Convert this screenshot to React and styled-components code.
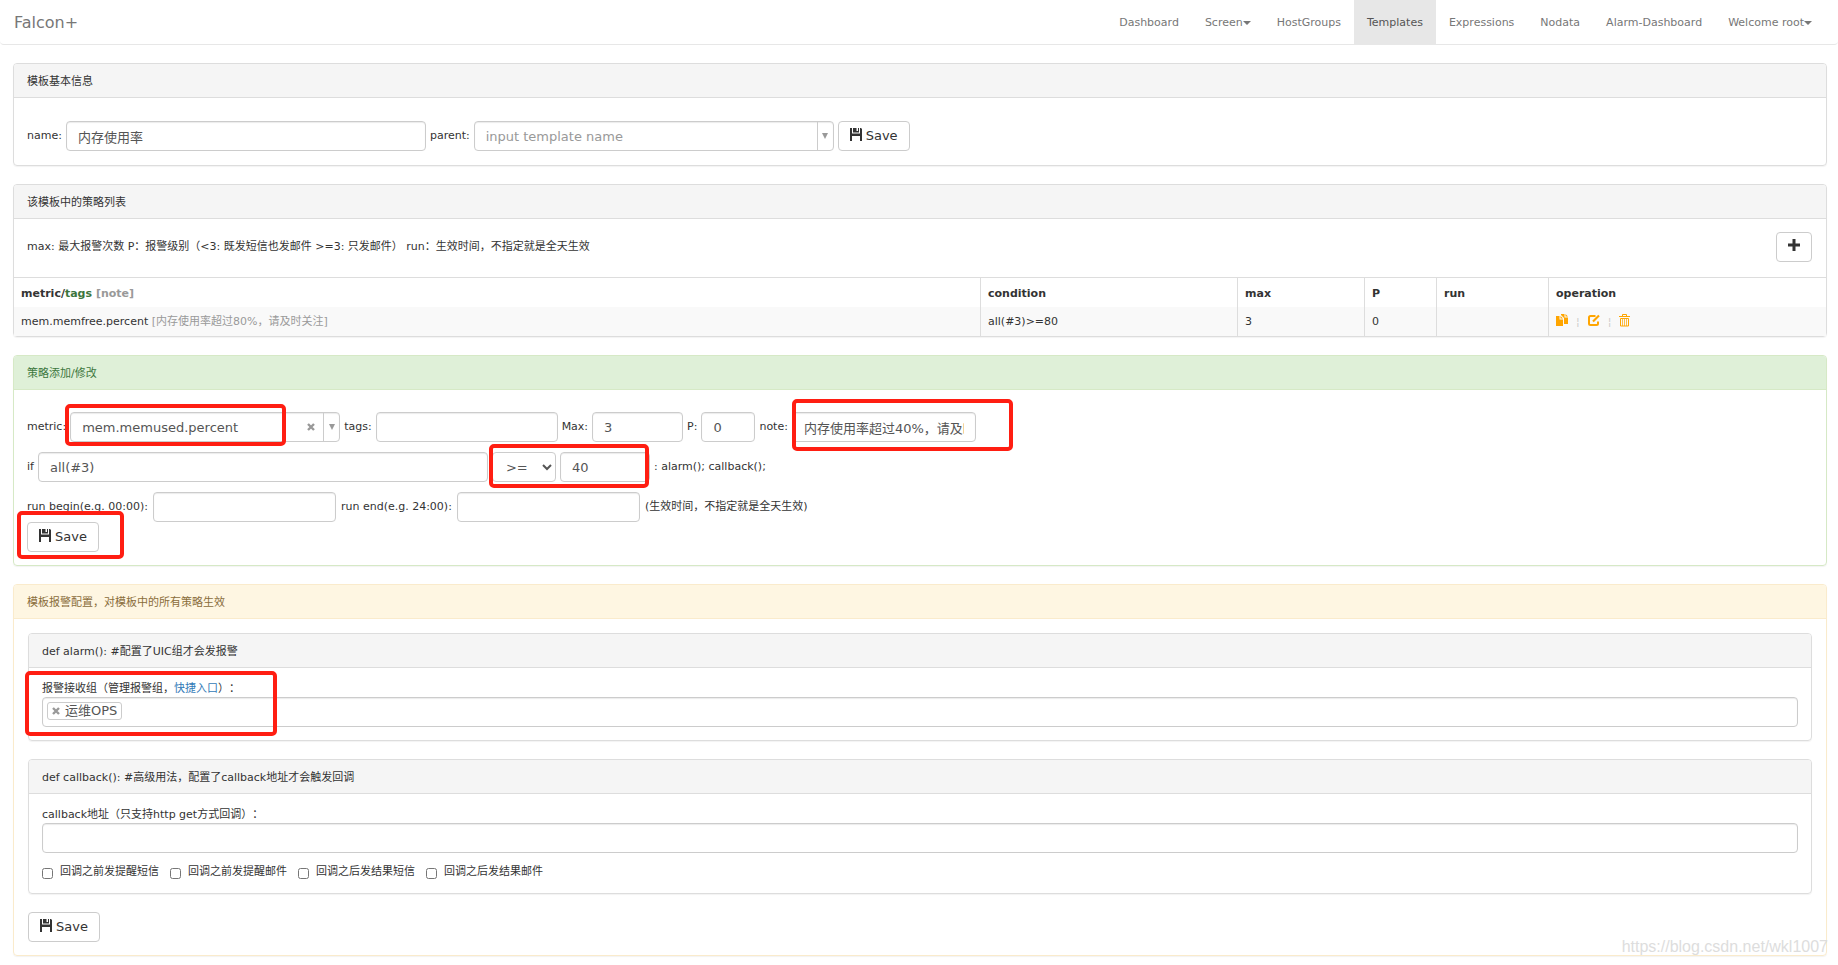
import React from "react";
import styled, { createGlobalStyle } from "styled-components";

const GlobalStyle = createGlobalStyle`
  * {
    box-sizing: border-box;
  }
  body {
    margin: 0;
    background: #fff;
    color: #333;
    font-family: "DejaVu Sans", "Noto Sans CJK SC", sans-serif;
    font-size: 11px;
    line-height: 16px;
    text-spacing-trim: space-all;
  }
  input, select, button {
    font-family: inherit;
  }
`;

const Navbar = styled.nav`
  display: flex;
  justify-content: space-between;
  height: 45px;
  padding: 0 13px 0 14px;
  border-bottom: 1px solid #e7e7e7;
  border-radius: 4px;
`;

const Brand = styled.a`
  color: #777;
  font-size: 16px;
  line-height: 46px;
  text-decoration: none;
`;

const NavList = styled.div`
  display: flex;
`;

const NavLink = styled.a`
  display: flex;
  align-items: center;
  padding: 2px 13px 0;
  color: ${props => (props.$active ? "#555" : "#777")};
  background: ${props => (props.$active ? "#e7e7e7" : "transparent")};
  text-decoration: none;
`;

const Caret = styled.span`
  border-top: 4px solid;
  border-left: 4px solid transparent;
  border-right: 4px solid transparent;
`;

const Page = styled.main`
  display: flex;
  flex-direction: column;
  gap: 18px;
  padding: 18px 11px 9px 13px;
`;

const tones = {
  plain: { border: "#ddd", background: "#f5f5f5", color: "#333" },
  success: { border: "#d6e9c6", background: "#dff0d8", color: "#3c763d" },
  warning: { border: "#faebcc", background: "#fef6e2", color: "#8a6d3b" },
};

const Panel = styled.section`
  border: 1px solid ${props => tones[props.$tone || "plain"].border};
  border-radius: 4px;
  box-shadow: 0 1px 1px rgba(0, 0, 0, 0.05);
`;

const PanelHeading = styled.header`
  padding: 10px 13px 7px;
  border-bottom: 1px solid ${props => tones[props.$tone || "plain"].border};
  border-radius: 3px 3px 0 0;
  background: ${props => tones[props.$tone || "plain"].background};
  color: ${props => tones[props.$tone || "plain"].color};
`;

const PanelBody = styled.div`
  padding: ${props => props.$padding || "13px"};
`;

const Row = styled.div`
  display: flex;
  align-items: center;
  gap: ${props => props.$gap || "4px"};
`;

const FormRows = styled.form`
  display: flex;
  flex-direction: column;
  gap: 10px;
`;

const Input = styled.input`
  display: block;
  width: ${props => props.$width || "100%"};
  height: 30px;
  padding: 0 11px;
  border: 1px solid #ccc;
  border-radius: 4px;
  background: #fff;
  color: #555;
  font-size: 13px;
  box-shadow: inset 0 1px 1px rgba(0, 0, 0, 0.08);
`;

const Operator = styled.select`
  width: 64px;
  height: 30px;
  padding: 0 7px 0 9px;
  border: 1px solid #ccc;
  border-radius: 4px;
  background: #fff;
  color: #555;
  font-size: 13px;
`;

const Combo = styled.div`
  display: flex;
  align-items: center;
  width: ${props => props.$width};
  height: 30px;
  border: 1px solid #ccc;
  border-radius: 4px;
  box-shadow: inset 0 1px 1px rgba(0, 0, 0, 0.08);
`;

const ComboInput = styled.input`
  flex: 1;
  min-width: 0;
  padding: 0 11px;
  border: 0;
  background: transparent;
  color: #555;
  font-size: 13px;
  &::placeholder {
    color: #999;
    opacity: 1;
  }
`;

const ComboButton = styled.button`
  display: flex;
  align-items: center;
  justify-content: center;
  align-self: stretch;
  width: ${props => (props.$divided ? "16px" : "24px")};
  padding: 0;
  border: 0;
  border-left: ${props => (props.$divided ? "1px solid #ccc" : "0")};
  background: transparent;
  color: #999;
`;

const Button = styled.button`
  display: inline-flex;
  align-items: center;
  justify-content: center;
  gap: 4px;
  height: 30px;
  padding: 0 11px 2px;
  border: 1px solid #ccc;
  border-radius: 4px;
  background: #fff;
  color: #333;
  font-size: 13px;
  svg {
    margin-bottom: 2px;
  }
`;

const Toolbar = styled.div`
  display: flex;
  align-items: center;
  justify-content: space-between;
  padding: 13px 14px 15px 13px;
`;

const Table = styled.table`
  width: 100%;
  table-layout: fixed;
  border-collapse: separate;
  border-spacing: 0;
`;

const HeadCell = styled.th`
  width: ${props => props.$width};
  padding: 8px 7px 5px;
  border-top: 1px solid #ddd;
  border-left: ${props => (props.$first ? "0" : "1px solid #ddd")};
  text-align: left;
`;

const Cell = styled.td`
  padding: 7px 7px 6px;
  border-left: ${props => (props.$first ? "0" : "1px solid #ddd")};
  background: #f9f9f9;
`;

const Tags = styled.span`
  color: #3c763d;
`;

const Muted = styled.span`
  color: #999;
`;

const Operations = styled.div`
  display: flex;
  align-items: flex-start;
  gap: 8px;
  height: 16px;
  color: #ccc;
`;

const IconLink = styled.a`
  display: flex;
  color: orange;
`;

const Link = styled.a`
  color: #337ab7;
  text-decoration: none;
`;

const Stack = styled.div`
  display: flex;
  flex-direction: column;
  align-items: flex-start;
  gap: 18px;
  ${Panel} {
    width: 100%;
  }
`;

const TokenBox = styled.div`
  display: flex;
  align-items: flex-start;
  height: 30px;
  padding: 4px;
  border: 1px solid #ccc;
  border-radius: 4px;
  box-shadow: inset 0 1px 1px rgba(0, 0, 0, 0.08);
`;

const Token = styled.span`
  display: flex;
  align-items: center;
  gap: 5px;
  height: 18px;
  padding: 0 4px;
  border: 1px solid #ccc;
  border-radius: 3px;
  color: #555;
  font-size: 13px;
`;

const TokenRemove = styled.button`
  display: flex;
  padding: 0;
  border: 0;
  background: transparent;
  color: #999;
`;

const Checks = styled.div`
  display: flex;
  gap: 11px;
  padding-top: 11px;
`;

const Check = styled.label`
  display: flex;
  align-items: center;
  gap: 7px;
`;

const CheckBox = styled.input`
  width: 11px;
  height: 11px;
  margin: 2px 0 0;
`;

const Marked = styled.div`
  position: relative;
`;

// red highlight drawn over the controls
const Mark = styled.span`
  position: absolute;
  top: ${props => props.$top}px;
  left: ${props => props.$left}px;
  width: ${props => props.$width}px;
  height: ${props => props.$height}px;
  border: 4px solid #ff1e12;
  border-radius: 5px;
  pointer-events: none;
`;

const Watermark = styled.div`
  position: absolute;
  right: 10px;
  bottom: 8px;
  color: #ddd;
  font-family: "Liberation Sans", sans-serif;
  font-size: 16px;
  line-height: 20px;
`;

const SaveIcon = () => (
  <svg width="12" height="13" viewBox="0 0 12 13" fill="currentColor" aria-hidden="true">
    <path d="M0 0h2v5.500h8V0h1l1 1v12h-2V8H2v5H0zM3 0h3.500v3H8V0h1v4.500H3z" />
  </svg>
);

const PlusIcon = () => (
  <svg width="12" height="12" viewBox="0 0 12 12" fill="currentColor" aria-hidden="true">
    <path d="M4.500 0h3v4.500H12v3H7.500V12h-3V7.500H0v-3h4.500z" />
  </svg>
);

const CopyIcon = () => (
  <svg width="12" height="12" viewBox="0 0 12 12" fill="currentColor" aria-hidden="true">
    <path d="M0 2h3.500v3.500H7V12H0zM4.500 2L7 4.500H4.500zM5 0h3.500v3.500H12V10H8V4L5 1zM9.500 0L12 2.500H9.500z" />
  </svg>
);

const EditIcon = () => (
  <svg width="12" height="12" viewBox="0 0 12 12" fill="none" stroke="currentColor" aria-hidden="true">
    <path d="M7.500 2H2.500Q1 2 1 3.500v6Q1 11 2.500 11h6Q10 11 10 9.500V7.500" strokeWidth="2" />
    <path d="M5 7.500L11 1.500" strokeWidth="2.200" />
  </svg>
);

const TrashIcon = () => (
  <svg width="11" height="13" viewBox="0 0 11 13" fill="none" stroke="currentColor" aria-hidden="true">
    <path d="M0 2.500h11M3.500 2V.5h4V2M1.500 4.500h8v7.500h-8z" />
    <path d="M3.500 5v7M5.500 5v7M7.500 5v7" strokeOpacity="0.7" />
  </svg>
);

const CrossIcon = () => (
  <svg width="8" height="8" viewBox="0 0 8 8" stroke="currentColor" strokeWidth="2.400" aria-hidden="true">
    <path d="M1 1l6 6M7 1L1 7" />
  </svg>
);

const ArrowIcon = () => (
  <svg width="6" height="6" viewBox="0 0 6 6" fill="currentColor" aria-hidden="true">
    <path d="M0 0h6L3 6z" />
  </svg>
);

const SaveButton = () => (
  <Button type="button">
    <SaveIcon />
    Save
  </Button>
);

const navItems = [
  { label: "Dashboard" },
  { label: "Screen", caret: true },
  { label: "HostGroups" },
  { label: "Templates", active: true },
  { label: "Expressions" },
  { label: "Nodata" },
  { label: "Alarm-Dashboard" },
  { label: "Welcome root", caret: true },
];

const callbackOptions = [
  "回调之前发提醒短信",
  "回调之前发提醒邮件",
  "回调之后发结果短信",
  "回调之后发结果邮件",
];

const Header = () => (
  <Navbar>
    <Brand href="#">Falcon+</Brand>
    <NavList>
      {navItems.map(item => (
        <NavLink key={item.label} href="#" $active={item.active}>
          {item.label}
          {item.caret && <Caret />}
        </NavLink>
      ))}
    </NavList>
  </Navbar>
);

const BasicInfo = () => (
  <Panel>
    <PanelHeading>模板基本信息</PanelHeading>
    <PanelBody $padding="23px 13px 14px">
      <Row>
        <label htmlFor="name">name:</label>
        <Input id="name" $width="360px" defaultValue="内存使用率" />
        <label htmlFor="parent">parent:</label>
        <Combo $width="360px">
          <ComboInput id="parent" placeholder="input template name" />
          <ComboButton type="button" $divided aria-label="open"><ArrowIcon /></ComboButton>
        </Combo>
        <SaveButton />
      </Row>
    </PanelBody>
  </Panel>
);

const StrategyList = () => (
  <Panel>
    <PanelHeading>该模板中的策略列表</PanelHeading>
    <Toolbar>
      <span>max: 最大报警次数 P：报警级别（&lt;3: 既发短信也发邮件 &gt;=3: 只发邮件） run：生效时间，不指定就是全天生效</span>
      <Button type="button" aria-label="add"><PlusIcon /></Button>
    </Toolbar>
    <Table>
      <thead>
        <tr>
          <HeadCell $first>metric/<Tags>tags</Tags> <Muted>[note]</Muted></HeadCell>
          <HeadCell $width="257px">condition</HeadCell>
          <HeadCell $width="127px">max</HeadCell>
          <HeadCell $width="72px">P</HeadCell>
          <HeadCell $width="112px">run</HeadCell>
          <HeadCell $width="278px">operation</HeadCell>
        </tr>
      </thead>
      <tbody>
        <tr>
          <Cell $first>mem.memfree.percent <Muted>[内存使用率超过80%，请及时关注]</Muted></Cell>
          <Cell>all(#3)&gt;=80</Cell>
          <Cell>3</Cell>
          <Cell>0</Cell>
          <Cell />
          <Cell>
            <Operations>
              <IconLink href="#" aria-label="clone"><CopyIcon /></IconLink>
              ¦
              <IconLink href="#" aria-label="edit"><EditIcon /></IconLink>
              ¦
              <IconLink href="#" aria-label="delete"><TrashIcon /></IconLink>
            </Operations>
          </Cell>
        </tr>
      </tbody>
    </Table>
  </Panel>
);

const StrategyForm = () => (
  <Panel $tone="success">
    <PanelHeading $tone="success">策略添加/修改</PanelHeading>
    <PanelBody $padding="22px 13px 13px">
      <Marked>
        <FormRows>
          <Row>
            <label htmlFor="metric">metric:</label>
            <Combo $width="270px">
              <ComboInput id="metric" defaultValue="mem.memused.percent" />
              <ComboButton type="button" aria-label="clear"><CrossIcon /></ComboButton>
              <ComboButton type="button" $divided aria-label="open"><ArrowIcon /></ComboButton>
            </Combo>
            <label htmlFor="tags">tags:</label>
            <Input id="tags" $width="182px" />
            <label htmlFor="max">Max:</label>
            <Input id="max" $width="91px" defaultValue="3" />
            <label htmlFor="priority">P:</label>
            <Input id="priority" $width="54px" defaultValue="0" />
            <label htmlFor="note">note:</label>
            <Input id="note" $width="184px" defaultValue="内存使用率超过40%，请及时关注" />
          </Row>
          <Row>
            <label htmlFor="func">if</label>
            <Input id="func" $width="450px" defaultValue="all(#3)" />
            <Operator aria-label="operator" defaultValue=">=">
              <option>&gt;=</option>
            </Operator>
            <Input aria-label="threshold" $width="90px" defaultValue="40" />
            <span>: alarm(); callback();</span>
          </Row>
          <Row $gap="5px">
            <label htmlFor="begin">run begin(e.g. 00:00):</label>
            <Input id="begin" $width="183px" />
            <label htmlFor="end">run end(e.g. 24:00):</label>
            <Input id="end" $width="183px" />
            <span>(生效时间，不指定就是全天生效)</span>
          </Row>
        </FormRows>
        <SaveButton />
        <Mark $left={38} $top={-8} $width={221} $height={42} />
        <Mark $left={765} $top={-13} $width={221} $height={52} />
        <Mark $left={462} $top={32} $width={160} $height={44} />
        <Mark $left={-10} $top={99} $width={107} $height={48} />
      </Marked>
    </PanelBody>
  </Panel>
);

const AlarmConfig = () => (
  <Panel $tone="warning">
    <PanelHeading $tone="warning">模板报警配置，对模板中的所有策略生效</PanelHeading>
    <PanelBody $padding="14px 14px 13px">
      <Stack>
        <Panel>
          <PanelHeading>def alarm(): #配置了UIC组才会发报警</PanelHeading>
          <PanelBody>
            <Marked>
              <div>报警接收组（管理报警组，<Link href="#">快捷入口</Link>）：</div>
              <TokenBox>
                <Token>
                  <TokenRemove type="button" aria-label="remove"><CrossIcon /></TokenRemove>
                  运维OPS
                </Token>
              </TokenBox>
              <Mark $left={-17} $top={-10} $width={252} $height={65} />
            </Marked>
          </PanelBody>
        </Panel>
        <Panel>
          <PanelHeading>def callback(): #高级用法，配置了callback地址才会触发回调</PanelHeading>
          <PanelBody>
            <label htmlFor="callback">callback地址（只支持http get方式回调）：</label>
            <Input id="callback" />
            <Checks>
              {callbackOptions.map(option => (
                <Check key={option}>
                  <CheckBox type="checkbox" />
                  {option}
                </Check>
              ))}
            </Checks>
          </PanelBody>
        </Panel>
        <SaveButton />
      </Stack>
    </PanelBody>
  </Panel>
);

const App = () => (
  <Marked>
    <GlobalStyle />
    <Header />
    <Page>
      <BasicInfo />
      <StrategyList />
      <StrategyForm />
      <AlarmConfig />
    </Page>
    <Watermark>https://blog.csdn.net/wkl1007</Watermark>
  </Marked>
);

export default App;
